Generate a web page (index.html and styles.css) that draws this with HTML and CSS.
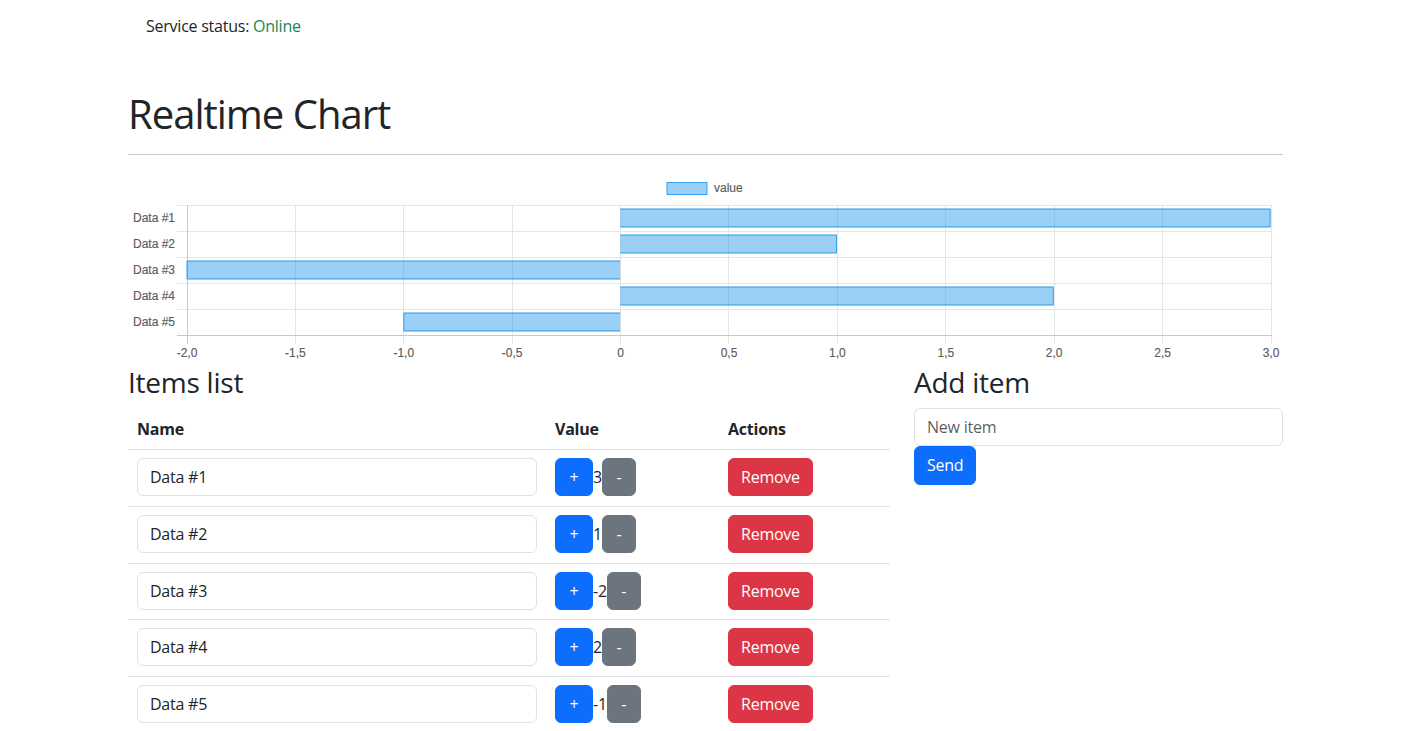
FILE: index.html
```html
<!DOCTYPE html>
<html lang="en">
<head>
<meta charset="utf-8">
<title>Realtime Chart</title>
<link rel="stylesheet" href="styles.css">
</head>
<body>
<div class="status-bar">Service status: <span class="online">Online</span></div>
<main class="container">
  <h1 class="title">Realtime Chart</h1>
  <hr class="divider">
  <svg class="chart" width="1155" height="195" viewBox="0 0 1155 195" xmlns="http://www.w3.org/2000/svg">
    <g class="legend">
      <rect x="539" y="11.5" width="40" height="12" fill="rgba(54,162,235,0.5)" stroke="rgb(54,162,235)" stroke-width="1"/>
      <text x="586" y="21.3" class="lbl">value</text>
    </g>
    <g stroke="#e5e5e5" stroke-width="1">
      <line x1="167.5" y1="34" x2="167.5" y2="173"/>
      <line x1="275.5" y1="34" x2="275.5" y2="173"/>
      <line x1="384.5" y1="34" x2="384.5" y2="173"/>
      <line x1="492.5" y1="34" x2="492.5" y2="173"/>
      <line x1="600.5" y1="34" x2="600.5" y2="173"/>
      <line x1="709.5" y1="34" x2="709.5" y2="173"/>
      <line x1="817.5" y1="34" x2="817.5" y2="173"/>
      <line x1="926.5" y1="34" x2="926.5" y2="173"/>
      <line x1="1034.5" y1="34" x2="1034.5" y2="173"/>
      <line x1="1143.5" y1="34" x2="1143.5" y2="173"/>
      <line x1="49" y1="34.5" x2="1144" y2="34.5"/>
      <line x1="49" y1="60.5" x2="1144" y2="60.5"/>
      <line x1="49" y1="86.5" x2="1144" y2="86.5"/>
      <line x1="49" y1="112.5" x2="1144" y2="112.5"/>
      <line x1="49" y1="138.5" x2="1144" y2="138.5"/>
    </g>
    <g stroke="#c8c8c8" stroke-width="1">
      <line x1="59.5" y1="34" x2="59.5" y2="173"/>
      <line x1="49" y1="164.5" x2="1144" y2="164.5"/>
    </g>
    <g class="bars">
      <rect x="492.2" y="37.6" width="650.4" height="18.8" fill="rgba(54,162,235,0.5)"/>
      <path d="M492.2 38.1 H1142.1 V55.9 H492.2" fill="none" stroke="rgb(54,162,235)"/>
      <rect x="492.2" y="63.6" width="216.8" height="18.8" fill="rgba(54,162,235,0.5)"/>
      <path d="M492.2 64.1 H708.5 V81.9 H492.2" fill="none" stroke="rgb(54,162,235)"/>
      <rect x="58.6" y="89.6" width="433.6" height="18.8" fill="rgba(54,162,235,0.5)"/>
      <path d="M492.2 90.1 H59.1 V107.9 H492.2" fill="none" stroke="rgb(54,162,235)"/>
      <rect x="492.2" y="115.6" width="433.6" height="18.8" fill="rgba(54,162,235,0.5)"/>
      <path d="M492.2 116.1 H925.3 V133.9 H492.2" fill="none" stroke="rgb(54,162,235)"/>
      <rect x="275.4" y="141.6" width="216.8" height="18.8" fill="rgba(54,162,235,0.5)"/>
      <path d="M492.2 142.1 H275.9 V159.9 H492.2" fill="none" stroke="rgb(54,162,235)"/>
    </g>
    <g class="lbl" text-anchor="end">
      <text x="47" y="51.3">Data #1</text>
      <text x="47" y="77.3">Data #2</text>
      <text x="47" y="103.3">Data #3</text>
      <text x="47" y="129.3">Data #4</text>
      <text x="47" y="155.3">Data #5</text>
    </g>
    <g class="lbl" text-anchor="middle">
      <text x="59" y="185.5">-2,0</text>
      <text x="167.4" y="185.5">-1,5</text>
      <text x="275.8" y="185.5">-1,0</text>
      <text x="384.2" y="185.5">-0,5</text>
      <text x="492.6" y="185.5">0</text>
      <text x="601" y="185.5">0,5</text>
      <text x="709.4" y="185.5">1,0</text>
      <text x="817.8" y="185.5">1,5</text>
      <text x="926.2" y="185.5">2,0</text>
      <text x="1034.6" y="185.5">2,5</text>
      <text x="1143" y="185.5">3,0</text>
    </g>
  </svg>

  <div class="row">
    <section class="col-list">
      <h3 class="section-title list-title">Items list</h3>
      <table class="table">
        <thead>
          <tr>
            <th class="c-name">Name</th>
            <th class="c-value">Value</th>
            <th class="c-actions">Actions</th>
          </tr>
        </thead>
        <tbody>
          <tr>
            <td><input class="form-control" type="text" value="Data #1"></td>
            <td><button class="btn btn-primary btn-plus">+</button>3<button class="btn btn-secondary btn-minus">-</button></td>
            <td><button class="btn btn-danger">Remove</button></td>
          </tr>
          <tr>
            <td><input class="form-control" type="text" value="Data #2"></td>
            <td><button class="btn btn-primary btn-plus">+</button>1<button class="btn btn-secondary btn-minus">-</button></td>
            <td><button class="btn btn-danger">Remove</button></td>
          </tr>
          <tr>
            <td><input class="form-control" type="text" value="Data #3"></td>
            <td><button class="btn btn-primary btn-plus">+</button>-2<button class="btn btn-secondary btn-minus">-</button></td>
            <td><button class="btn btn-danger">Remove</button></td>
          </tr>
          <tr>
            <td><input class="form-control" type="text" value="Data #4"></td>
            <td><button class="btn btn-primary btn-plus">+</button>2<button class="btn btn-secondary btn-minus">-</button></td>
            <td><button class="btn btn-danger">Remove</button></td>
          </tr>
          <tr>
            <td><input class="form-control" type="text" value="Data #5"></td>
            <td><button class="btn btn-primary btn-plus">+</button>-1<button class="btn btn-secondary btn-minus">-</button></td>
            <td><button class="btn btn-danger">Remove</button></td>
          </tr>
        </tbody>
      </table>
    </section>
    <section class="col-add">
      <h3 class="section-title">Add item</h3>
      <input class="form-control" type="text" placeholder="New item">
      <button class="btn btn-primary btn-send">Send</button>
    </section>
  </div>
</main>
</body>
</html>
```

FILE: styles.css
```css
*, *::before, *::after { box-sizing: border-box; }

body {
  margin: 0;
  font-family: "Open Sans", "Noto Sans", sans-serif;
  font-size: 16px;
  line-height: 1.5;
  color: #212529;
  background: #fff;
  letter-spacing: -0.015em;
}

.status-bar {
  width: 1155px;
  margin: 0 auto;
  padding: 14px 18px 0;
  line-height: 24px;
}

.online { color: #198754; }

.container {
  width: 1155px;
  margin: 0 auto;
}

.title {
  margin: 52px 0 8px;
  font-size: 40px;
  font-weight: 400;
  line-height: 48px;
  letter-spacing: -0.025em;
}

.divider {
  margin: 16px 0;
  border: 0;
  border-top: 1px solid #212529;
  opacity: .25;
}

.chart {
  display: block;
  letter-spacing: 0;
}

.lbl, .lbl text {
  font-family: "Liberation Sans", Arial, sans-serif;
  font-size: 12px;
  fill: #5c5c5c;
  stroke: #5c5c5c;
  stroke-width: 0.15px;
}

.row {
  display: flex;
  gap: 24px;
}

.col-list { width: 762px; }
.col-add { width: 369px; }

.section-title {
  margin: 0 0 8px;
  font-size: 28px;
  font-weight: 400;
  line-height: 1.2;
}

.list-title { margin-bottom: 9.5px; }

.table {
  width: 762px;
  border-collapse: collapse;
  vertical-align: top;
}

.table th, .table td {
  padding: 8px 9px 8px;
  border-bottom: 1px solid #dee2e6;
  text-align: left;
  vertical-align: top;
}

.table td { padding-bottom: 9.75px; }

.table th { font-weight: 700; }

.c-name { width: 418px; }
.c-value { width: 173px; }
.c-actions { width: 171px; }

.form-control {
  display: block;
  width: 100%;
  height: 38px;
  padding: 6px 12px;
  font-family: inherit;
  font-size: 16px;
  line-height: 24px;
  letter-spacing: inherit;
  color: #212529;
  background: #fff;
  border: 1px solid #dee2e6;
  border-radius: 6px;
}

.form-control::placeholder { color: rgba(33, 37, 41, .75); }

.btn {
  display: inline-block;
  height: 38px;
  padding: 6px 12px;
  font-family: inherit;
  font-size: 16px;
  line-height: 24px;
  letter-spacing: inherit;
  color: #fff;
  border: 1px solid transparent;
  border-radius: 6px;
  vertical-align: baseline;
  cursor: pointer;
}

.btn-primary { background: #0d6efd; border-color: #0d6efd; }
.btn-secondary { background: #6c757d; border-color: #6c757d; }
.btn-danger { background: #dc3545; border-color: #dc3545; }

.btn-plus { width: 38px; padding: 6px 0; text-align: center; }
.btn-minus { width: 34px; padding: 6px 0; text-align: center; }
.btn-send { height: 39.5px; }
```
